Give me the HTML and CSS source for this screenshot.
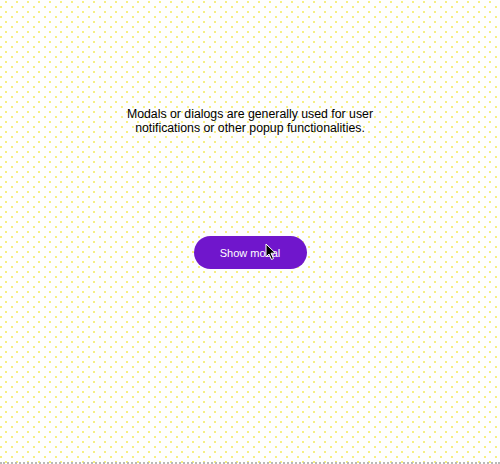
FILE: index.html
```html
<!DOCTYPE html>
<html>
<head>
<meta charset="utf-8">
<link rel="stylesheet" href="styles.css">
</head>
<body>
<main class="page">
  <p class="intro">Modals or dialogs are generally used for user notifications or other popup functionalities.</p>
  <div class="action">
    <button class="show-btn" type="button">Show modal</button>
    <svg class="cursor" width="12" height="18" viewBox="0 0 12 18"><path d="M1 1 L1 14 L4 11 L6.5 16.5 L8.5 15.6 L6 10.2 L10.5 10.2 Z" fill="#000" stroke="#fff" stroke-width="1"/></svg>
  </div>
</main>
</body>
</html>
```
FILE: styles.css
```css
html, body {
  margin: 0;
  padding: 0;
}
body {
  width: 500px;
  height: 464px;
  overflow: hidden;
  font-family: "Liberation Sans", Arial, sans-serif;
  background-color: #fefefe;
  background-image:
    radial-gradient(circle at 1px 1px, #f6ef80 0.7px, transparent 1px),
    radial-gradient(circle at 1px 1px, #f6ef80 0.7px, transparent 1px);
  background-size: 11px 10px, 11px 10px;
  background-position: 5px 1px, 0 6px;
}
.page {
  box-sizing: border-box;
  height: 464px;
  display: flex;
  flex-direction: column;
  align-items: center;
  border-bottom: 2px dotted #b8b8b8;
}
.intro {
  margin: 107px 0 0;
  width: 260px;
  text-align: center;
  font-size: 12.3px;
  line-height: 14px;
  color: #000;
}
.action {
  position: relative;
  margin-top: 101px;
}
.show-btn {
  display: block;
  width: 113px;
  height: 33px;
  border: none;
  border-radius: 17px;
  background: #7016cc;
  color: #fff;
  font-family: "Liberation Sans", Arial, sans-serif;
  font-size: 11px;
  padding: 0;
}
.cursor {
  position: absolute;
  left: 71px;
  top: 7px;
}
```
